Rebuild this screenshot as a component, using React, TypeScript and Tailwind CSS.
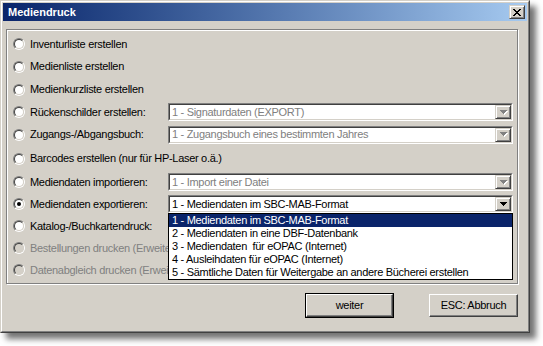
const FONT = "font-['Liberation_Sans',Arial,sans-serif]";

const ROWS = [
  { label: "Inventurliste erstellen", h: "h-[22px]" },
  { label: "Medienliste erstellen", h: "h-[23px]" },
  { label: "Medienkurzliste erstellen", h: "h-[23px]" },
  { label: "Rückenschilder erstellen:", h: "h-[22px]", combo: "1 - Signaturdaten (EXPORT)" },
  { label: "Zugangs-/Abgangsbuch:", h: "h-[23px]", combo: "1 - Zugangsbuch eines bestimmten Jahres" },
  { label: "Barcodes erstellen (nur für HP-Laser o.ä.)", h: "h-[25px]" },
  { label: "Mediendaten importieren:", h: "h-[22px]", combo: "1 - Import einer Datei" },
  { label: "Mediendaten exportieren:", h: "h-[22px]", combo: "1 - Mediendaten im SBC-MAB-Format", active: true, open: true },
  { label: "Katalog-/Buchkartendruck:", h: "h-[22px]" },
  { label: "Bestellungen drucken (Erweiterungsmodul)", h: "h-[22px]", disabled: true },
  { label: "Datenabgleich drucken (Erweiterungsmodul)", h: "h-[22px]", disabled: true },
];

const OPTIONS = [
  "1 - Mediendaten im SBC-MAB-Format",
  "2 - Mediendaten in eine DBF-Datenbank",
  "3 - Mediendaten  für eOPAC (Internet)",
  "4 - Ausleihdaten für eOPAC (Internet)",
  "5 - Sämtliche Daten für Weitergabe an andere Bücherei erstellen",
];

function Radio({ checked, disabled }: { checked?: boolean; disabled?: boolean }) {
  return (
    <span className="flex size-[12px] shrink-0 rounded-full border border-t-[#808080] border-l-[#808080] border-b-white border-r-white">
      <span
        className={`flex size-[10px] items-center justify-center rounded-full border border-t-[#404040] border-l-[#404040] border-b-[#D4D0C8] border-r-[#D4D0C8] ${
          disabled ? "bg-[#D4D0C8]" : "bg-white"
        }`}
      >
        {checked && <span className="size-[4px] rounded-full bg-black" />}
      </span>
    </span>
  );
}

function Arrow({ disabled }: { disabled?: boolean }) {
  const d = "M0 0h7v1H0zM1 1h5v1H1zM2 2h3v1H2zM3 3h1v1H3z";
  return (
    <svg width="8" height="5" viewBox="0 0 8 5" shapeRendering="crispEdges">
      {disabled && <path d={d} fill="#ffffff" transform="translate(1 1)" />}
      <path d={d} fill={disabled ? "#808080" : "#000000"} />
    </svg>
  );
}

function Combo({ value, active }: { value: string; active?: boolean }) {
  return (
    <div className="flex h-[18px] w-[345px] border border-t-[#808080] border-l-[#808080] border-b-white border-r-white">
      <div className="flex flex-1 items-stretch border border-t-[#404040] border-l-[#404040] border-b-[#D4D0C8] border-r-[#D4D0C8] bg-white">
        <span
          className={`flex flex-1 items-center pl-[2px] ${
            active ? "text-black" : "text-[#808080]"
          }`}
        >
          {value}
        </span>
        <span className="flex w-[16px] items-center justify-center border border-t-[#D4D0C8] border-l-[#D4D0C8] border-b-[#404040] border-r-[#404040] bg-[#D4D0C8] pl-px shadow-[inset_1px_1px_0_#fff,inset_-1px_-1px_0_#808080]">
          <Arrow disabled={!active} />
        </span>
      </div>
    </div>
  );
}

export default function App() {
  return (
    <div className={`h-[346px] w-[543px] bg-white text-[11px] tracking-[-0.3px] text-black ${FONT}`}>
      <div className="flex h-[333px] w-[530px] flex-col border border-t-[#D4D0C8] border-l-[#D4D0C8] border-b-[#404040] border-r-[#404040] bg-[#D4D0C8] shadow-[6px_6px_6px_rgba(0,0,0,0.55)]">
        <div className="flex flex-1 flex-col border border-t-white border-l-white border-b-[#808080] border-r-[#808080] p-px">
          {/* title bar */}
          <div className="flex h-[18px] items-center justify-between bg-linear-to-r from-[#0A246A] to-[#A6CAF0] pl-[5px] pr-[2px]">
            <span className="text-[11px] font-bold tracking-normal text-white">Mediendruck</span>
            <span className="flex h-[14px] w-[16px] items-center justify-center border border-t-[#D4D0C8] border-l-[#D4D0C8] border-b-[#404040] border-r-[#404040] bg-[#D4D0C8] shadow-[inset_1px_1px_0_#fff,inset_-1px_-1px_0_#808080]">
              <svg width="8" height="7" viewBox="0 0 8 7" shapeRendering="crispEdges">
                <path
                  d="M0 0h2v1H0zM6 0h2v1H6zM1 1h2v1H1zM5 1h2v1H5zM2 2h4v1H2zM3 3h2v1H3zM2 4h4v1H2zM1 5h2v1H1zM5 5h2v1H5zM0 6h2v1H0zM6 6h2v1H6z"
                  fill="#000"
                />
              </svg>
            </span>
          </div>

          {/* group box */}
          <div className="ml-[3px] mt-[8px] w-[512px] border border-[#808080] pb-[2px] pl-[6px] pt-[3px] shadow-[inset_1px_1px_0_#fff,1px_1px_0_#fff]">
            {ROWS.map((row) => (
              <div key={row.label} className={`flex items-center ${row.h}`}>
                <Radio checked={row.active} disabled={row.disabled} />
                <span
                  className={`ml-[5px] w-[138px] shrink-0 whitespace-nowrap leading-none ${
                    row.disabled ? "overflow-hidden text-[#808080]" : ""
                  }`}
                >
                  {row.label}
                </span>
                {row.combo && (
                  <div className="relative">
                    <Combo value={row.combo} active={row.active} />
                    {row.open && (
                      <div className="absolute left-0 top-full z-10 w-[345px] border border-black bg-white">
                        {OPTIONS.map((opt, i) => (
                          <div
                            key={opt}
                            className={`h-[13px] whitespace-pre pl-[3px] leading-[13px] ${
                              i === 0 ? "bg-[#0A246A] text-white" : ""
                            }`}
                          >
                            {opt}
                          </div>
                        ))}
                      </div>
                    )}
                  </div>
                )}
              </div>
            ))}
          </div>

          {/* buttons */}
          <div className="mt-[9px] flex h-[25px] items-center justify-end gap-[35px] pr-[9px]">
            <button className="h-[25px] w-[89px] border border-black">
              <span className="flex h-full w-full items-center justify-center border border-t-white border-l-white border-b-[#404040] border-r-[#404040] shadow-[inset_-1px_-1px_0_#808080]">
                weiter
              </span>
            </button>
            <button className="flex h-[23px] w-[89px] items-center justify-center border border-t-white border-l-white border-b-[#404040] border-r-[#404040] shadow-[inset_-1px_-1px_0_#808080]">
              ESC: Abbruch
            </button>
          </div>
        </div>
      </div>
    </div>
  );
}
